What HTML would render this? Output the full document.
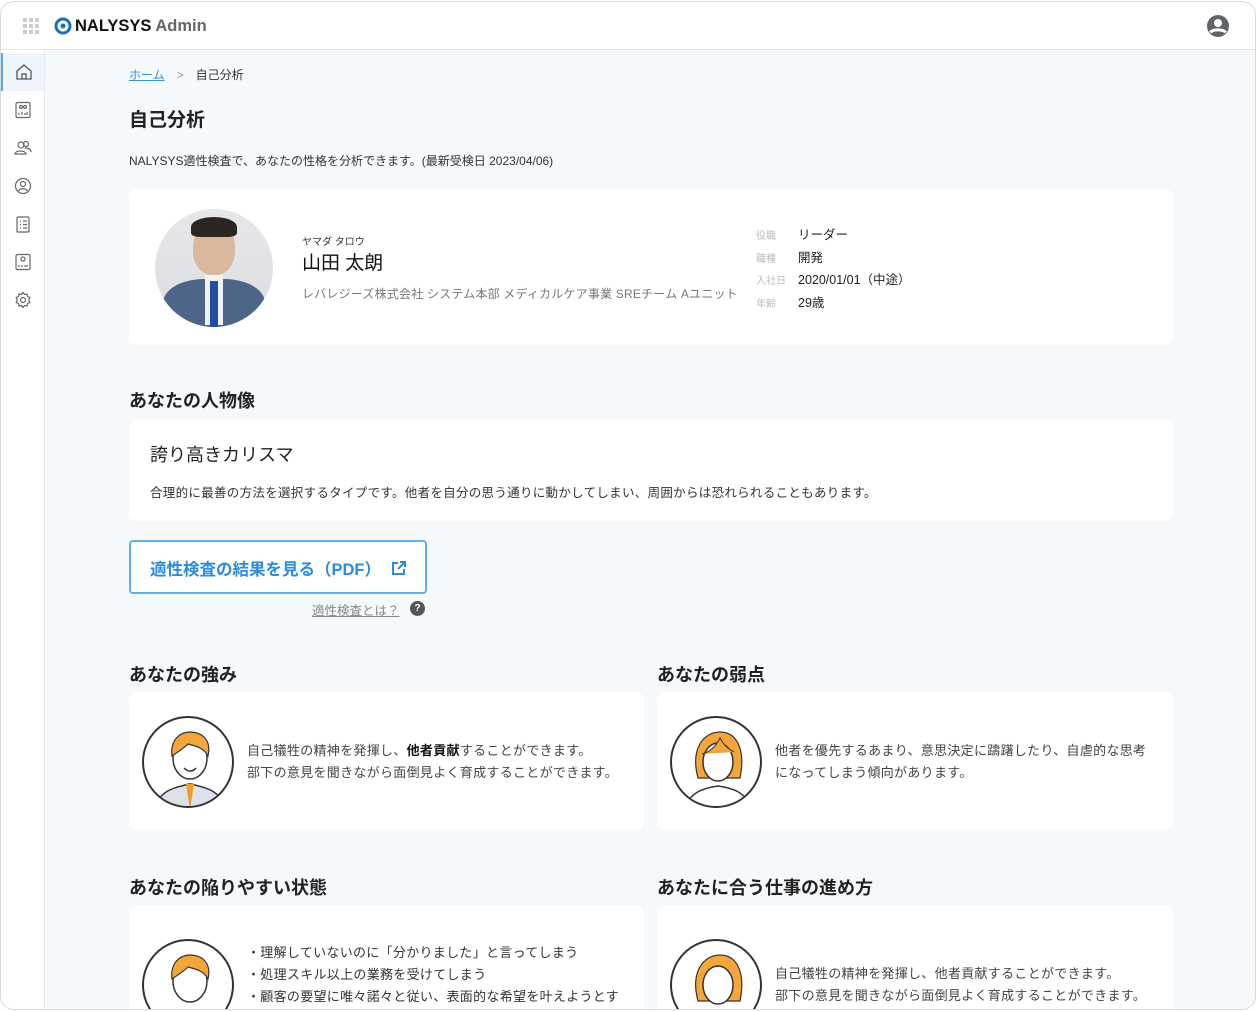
<!DOCTYPE html>
<html><head><meta charset="utf-8"><style>
*{box-sizing:border-box;margin:0;padding:0}
body{width:1256px;height:1011px;background:#fff;font-family:"Liberation Sans","Noto Sans CJK JP",sans-serif;color:#222;overflow:hidden}
.frame{position:absolute;left:0;top:1px;width:1256px;height:1009px;border:1px solid #d6d9dc;border-radius:14px;overflow:hidden;background:#f5f9fc}
.hdr{position:absolute;left:0;top:0;width:100%;height:48px;background:#fff;border-bottom:1px solid #e3e6e9}
.side{position:absolute;left:0;top:48px;width:44px;height:970px;background:#fff;border-right:1px solid #e3e6e9}
.side .it{height:38px;display:flex;align-items:center;justify-content:center}
.side .act{background:#eef5fc;border-left:2px solid #5aa9e6}
.abs{position:absolute}
.card{position:absolute;background:#fff;border-radius:8px}
h2{position:absolute;font-size:18px;font-weight:bold;color:#222}
.lbl{color:#b8bcc0;font-size:10px;display:inline-block;width:42px}
.row{font-size:12.5px;color:#222;height:22.5px}
.av{position:absolute;width:92px;height:92px;border-radius:50%;border:2px solid #333;background:#fff;overflow:hidden}
.txt{position:absolute;font-size:13px;color:#444;line-height:22px}
</style></head><body>
<div class="frame">
<div class="hdr">
 <svg class="abs" style="left:22px;top:16px" width="18" height="18"><g fill="#c9cdd1"><rect x="0" y="0" width="4" height="4"/><rect x="6" y="0" width="4" height="4"/><rect x="12" y="0" width="4" height="4"/><rect x="0" y="6" width="4" height="4"/><rect x="6" y="6" width="4" height="4"/><rect x="12" y="6" width="4" height="4"/><rect x="0" y="12" width="4" height="4"/><rect x="6" y="12" width="4" height="4"/><rect x="12" y="12" width="4" height="4"/></g></svg>
 <svg class="abs" style="left:53px;top:15px" width="18" height="18"><circle cx="9" cy="9" r="7" fill="none" stroke="#1a6fc0" stroke-width="3"/><circle cx="9" cy="9" r="2.5" fill="#1a6fc0"/></svg>
 <div class="abs" style="left:74px;top:15px;font-size:16.5px;font-weight:bold;color:#111">NALYSYS <span style="color:#666">Admin</span></div>
 <svg class="abs" style="left:1205px;top:12px" width="24" height="24"><circle cx="12" cy="12" r="11" fill="#5f6468"/><circle cx="12" cy="9" r="4" fill="#fff"/><path d="M4.5 18.5c2-3.5 13-3.5 15 0" stroke="#fff" stroke-width="3" fill="none"/></svg>
</div>
<div class="side">
 <div class="it act" style="margin-top:3px"><svg width="18" height="18" fill="none" stroke="#555" stroke-width="1.3"><path d="M2 8l7-6 7 6v8H2z M7 16v-5h4v5"/></svg></div>
 <div class="it"><svg width="18" height="18" fill="none" stroke="#666" stroke-width="1.2"><rect x="2" y="1.5" width="14" height="15" rx="1.5"/><circle cx="7" cy="6" r="1.5"/><circle cx="11" cy="6" r="1.5"/><path d="M5 14v-2M8 14v-3M11 14v-2M13 14v-3"/></svg></div>
 <div class="it"><svg width="18" height="18" fill="none" stroke="#666" stroke-width="1.2"><circle cx="7" cy="6" r="3"/><circle cx="12" cy="5" r="2.5"/><path d="M1 15c0-4 11-4 11 0zM11 9c3 0 6 1 6 4"/></svg></div>
 <div class="it"><svg width="18" height="18" fill="none" stroke="#666" stroke-width="1.2"><circle cx="9" cy="9" r="7.5"/><circle cx="9" cy="7" r="2.5"/><path d="M4.5 14c2-3 7-3 9 0"/></svg></div>
 <div class="it"><svg width="18" height="18" fill="none" stroke="#666" stroke-width="1.2"><rect x="3" y="2" width="12" height="15" rx="1"/><path d="M6 6h1M9 6h4M6 9.5h1M9 9.5h4M6 13h1M9 13h4"/></svg></div>
 <div class="it"><svg width="18" height="18" fill="none" stroke="#666" stroke-width="1.2"><rect x="2" y="1.5" width="14" height="15" rx="1.5"/><circle cx="9" cy="6" r="2"/><path d="M5 14v-2M8 14v-2M11 14v-2M13 14v-2"/></svg></div>
 <div class="it"><svg width="18" height="18" fill="none" stroke="#666" stroke-width="1.2"><circle cx="9" cy="9" r="2.5"/><path d="M9 1.5l1.5 2 2.5-.5.5 2.5 2.3 1-1 2.5 1 2.5-2.3 1-.5 2.5-2.5-.5L9 16.5l-1.5-2-2.5.5-.5-2.5-2.3-1 1-2.5-1-2.5 2.3-1 .5-2.5 2.5.5z"/></svg></div>
</div>

<div class="abs" style="left:128px;top:64px;font-size:12px"><span style="color:#3a8fd8;text-decoration:underline">ホーム</span><span style="color:#999;margin:0 12px">&gt;</span><span style="color:#333">自己分析</span></div>
<div class="abs" style="left:128px;top:103px;font-size:19px;font-weight:bold">自己分析</div>
<div class="abs" style="left:128px;top:150px;font-size:12px;color:#333">NALYSYS適性検査で、あなたの性格を分析できます。(最新受検日 2023/04/06)</div>

<div class="card" style="left:128px;top:187px;width:1044px;height:156px">
 <div class="abs" style="left:26px;top:20px;width:118px;height:118px;border-radius:50%;background:linear-gradient(#e6e7e9,#dcdde0);overflow:hidden">
  <div class="abs" style="left:38px;top:14px;width:42px;height:52px;border-radius:45%;background:#d9b89e"></div>
  <div class="abs" style="left:36px;top:8px;width:46px;height:20px;border-radius:50% 50% 20% 20%;background:#2b2622"></div>
  <div class="abs" style="left:8px;top:70px;width:102px;height:60px;border-radius:40% 40% 0 0;background:#4d6688"></div>
  <div class="abs" style="left:50px;top:66px;width:18px;height:50px;background:#f2f2f2"></div>
  <div class="abs" style="left:55px;top:72px;width:8px;height:46px;background:#1d4ea0"></div>
 </div>
 <div class="abs" style="left:173px;top:44px;font-size:10px;color:#333">ヤマダ タロウ</div>
 <div class="abs" style="left:173px;top:59px;font-size:19px;color:#111">山田 太朗</div>
 <div class="abs" style="left:173px;top:96px;font-size:12px;color:#777;letter-spacing:0.2px">レバレジーズ株式会社 システム本部 メディカルケア事業 SREチーム Aユニット</div>
 <div class="abs" style="left:627px;top:35px">
  <div class="row"><span class="lbl">役職</span>リーダー</div>
  <div class="row"><span class="lbl">職種</span>開発</div>
  <div class="row"><span class="lbl">入社日</span>2020/01/01（中途）</div>
  <div class="row"><span class="lbl">年齢</span>29歳</div>
 </div>
</div>

<h2 style="left:128px;top:385px">あなたの人物像</h2>
<div class="card" style="left:128px;top:417px;width:1044px;height:102px">
 <div class="abs" style="left:21px;top:22px;font-size:18px;color:#222">誇り高きカリスマ</div>
 <div class="abs" style="left:21px;top:63px;font-size:12.5px;color:#333;letter-spacing:0.3px">合理的に最善の方法を選択するタイプです。他者を自分の思う通りに動かしてしまい、周囲からは恐れられることもあります。</div>
</div>

<div class="abs" style="left:128px;top:538px;width:298px;height:54px;background:#fff;border:2px solid #5fb0ee;border-radius:4px;color:#2a8be0;font-size:16.5px;font-weight:bold;padding:14px 0 0 19px">適性検査の結果を見る（PDF）<svg style="position:absolute;left:260px;top:18px" width="16" height="16" fill="none" stroke="#2a8be0" stroke-width="2"><path d="M7 3H2v11h11V9M9 2h5v5M14 2L7 9"/></svg></div>
<div class="abs" style="left:311px;top:598px;font-size:12.5px;color:#888;text-decoration:underline">適性検査とは？</div>
<div class="abs" style="left:409px;top:599px;width:15px;height:15px;border-radius:50%;background:#555;color:#fff;font-size:10px;font-weight:bold;text-align:center;line-height:15px">?</div>

<h2 style="left:128px;top:659px">あなたの強み</h2>
<h2 style="left:656px;top:659px">あなたの弱点</h2>
<div class="card" style="left:128px;top:690px;width:515px;height:138px">
 <div class="av" style="left:13px;top:24px"><svg width="92" height="92"><path d="M10 92c5-20 20-22 35-26h2c15 4 30 6 35 26z" fill="#dfe1ea" stroke="#333" stroke-width="1.5"/><path d="M42 66l4 26 4-26z" fill="#f29d2a"/><ellipse cx="46" cy="40" rx="17" ry="21" fill="#fff" stroke="#333" stroke-width="1.5"/><path d="M28 38c-2-16 8-24 18-24s22 6 18 24c-4-8-12-10-20-12-4 4-10 8-16 12z" fill="#f5a63a" stroke="#333" stroke-width="1.2"/><path d="M40 50c4 4 9 4 12 0" stroke="#333" fill="none" stroke-width="1.5"/></svg></div>
 <div class="txt" style="left:118px;top:48px;letter-spacing:0.3px">自己犠牲の精神を発揮し、<b style="color:#111">他者貢献</b>することができます。<br>部下の意見を聞きながら面倒見よく育成することができます。</div>
</div>
<div class="card" style="left:656px;top:690px;width:516px;height:138px">
 <div class="av" style="left:13px;top:24px"><svg width="92" height="92"><path d="M12 92c5-18 20-22 34-24 14 2 29 6 34 24z" fill="#fff" stroke="#333" stroke-width="1.5"/><path d="M26 60c-8-30 6-46 22-46s26 16 20 46z" fill="#f5a63a" stroke="#333" stroke-width="1.2"/><ellipse cx="46" cy="44" rx="15" ry="19" fill="#fff" stroke="#333" stroke-width="1.5"/><path d="M30 36c8-2 14-8 18-16 4 8 10 12 14 14" fill="#f5a63a" stroke="#333"/></svg></div>
 <div class="txt" style="left:118px;top:48px;letter-spacing:0.3px">他者を優先するあまり、意思決定に躊躇したり、自虐的な思考<br>になってしまう傾向があります。</div>
</div>

<h2 style="left:128px;top:872px">あなたの陥りやすい状態</h2>
<h2 style="left:656px;top:872px">あなたに合う仕事の進め方</h2>
<div class="card" style="left:128px;top:903px;width:515px;height:140px">
 <div class="av" style="left:13px;top:34px"><svg width="92" height="92"><ellipse cx="46" cy="40" rx="17" ry="21" fill="#fff" stroke="#333" stroke-width="1.5"/><path d="M28 38c-2-16 8-24 18-24s22 6 18 24c-4-8-12-10-20-12-4 4-10 8-16 12z" fill="#f5a63a" stroke="#333" stroke-width="1.2"/></svg></div>
 <div class="txt" style="left:118px;top:37px;color:#333;letter-spacing:0.3px">・理解していないのに「分かりました」と言ってしまう<br>・処理スキル以上の業務を受けてしまう<br>・顧客の要望に唯々諾々と従い、表面的な希望を叶えようとす</div>
</div>
<div class="card" style="left:656px;top:903px;width:516px;height:140px">
 <div class="av" style="left:13px;top:34px"><svg width="92" height="92"><path d="M26 60c-8-30 6-46 22-46s26 16 20 46z" fill="#f5a63a" stroke="#333" stroke-width="1.2"/><ellipse cx="46" cy="44" rx="15" ry="19" fill="#fff" stroke="#333" stroke-width="1.5"/></svg></div>
 <div class="txt" style="left:118px;top:58px;letter-spacing:0.3px">自己犠牲の精神を発揮し、他者貢献することができます。<br>部下の意見を聞きながら面倒見よく育成することができます。</div>
</div>
</div>
</body></html>
